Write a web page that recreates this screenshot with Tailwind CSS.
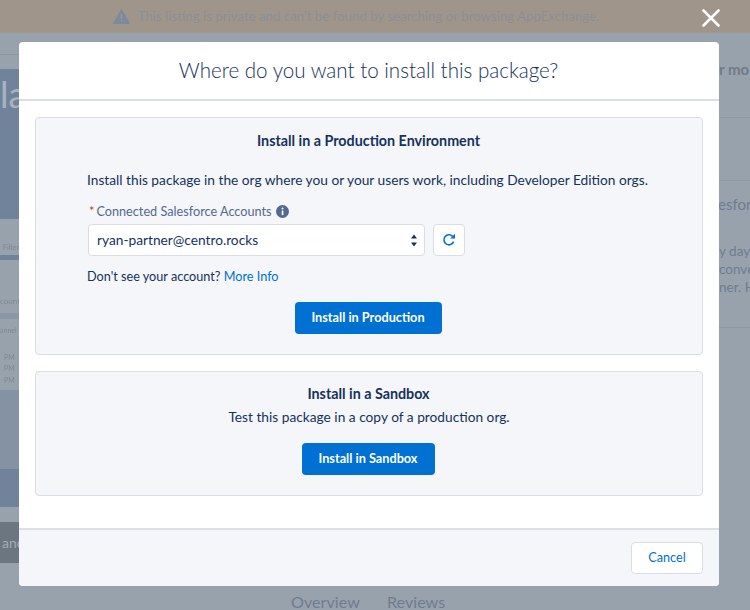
<!DOCTYPE html>
<html>
<head>
<meta charset="utf-8">
<script src="https://cdn.jsdelivr.net/npm/@tailwindcss/browser@4"></script>
</head>
<body class="w-[750px] h-[610px] overflow-hidden relative bg-[#98a2ad] font-['Lato','Noto_Sans',sans-serif] text-[#16325c]">
  <!-- page behind the backdrop -->
  <div class="h-[33px] bg-[#a0958b] flex items-center justify-center gap-[8px] text-[13.25px] text-[#8b8f94] pr-[38px]">
    <svg class="w-[17px] h-[15px]" viewBox="0 0 17 15"><path d="M8.5 0.5 L16.5 14.5 L0.5 14.5 Z" fill="#7d8a9b" stroke="#7d8a9b" stroke-linejoin="round"/><rect x="7.8" y="5" width="1.4" height="5" fill="#a0958b"/><rect x="7.8" y="11" width="1.4" height="1.5" fill="#a0958b"/></svg>
    <span>This listing is private and can't be found by searching or browsing AppExchange.</span>
  </div>
  <div class="flex justify-between h-[577px]">
    <div class="w-[19px] flex flex-col overflow-hidden whitespace-nowrap text-[#7f8a96]">
      <div class="h-[22px] border-b border-[#8a95a2] shrink-0"></div>
      <div class="h-[14px] shrink-0"></div>
      <div class="h-[150px] shrink-0 bg-[#71839b] text-[36px] leading-[34px] text-[#a9b3c0] pt-[8px]">la</div>
      <div class="h-[36px] shrink-0 text-[7px] leading-[8px] pt-[24px] pl-[3px] blur-[0.5px] flex items-start gap-[3px]">Filter<svg class="w-[5px] h-[4px] mt-[2px]" viewBox="0 0 5 4"><path d="M0 0.5 L2.5 3.5 L5 0.5" fill="none" stroke="#7f8a96" stroke-width="0.8"/></svg></div>
      <div class="h-[5px] shrink-0 bg-[#71839b]"></div>
      <div class="h-[53px] shrink-0 text-[8px] leading-[10px] pt-[36px] blur-[0.5px]">count</div>
      <div class="h-[6px] shrink-0 bg-[#8c97a4]"></div>
      <div class="h-[71px] shrink-0 text-[7px] leading-[11.5px] pt-[6px] blur-[0.5px]">annel<div class="h-[15px]"></div><div class="pl-[4px]">PM</div><div class="pl-[4px]">PM</div><div class="pl-[4px]">PM</div></div>
      <div class="h-[79px] shrink-0 bg-[#8492a3]"></div>
      <div class="h-[38px] shrink-0 bg-[#71839b]"></div>
      <div class="h-[15px] shrink-0"></div>
      <div class="h-[41px] shrink-0 bg-[#6b7680] pl-[2px] text-[14px] leading-[41px] text-[#a3abb4]">and</div>
    </div>
    <div class="w-[31px] overflow-hidden whitespace-nowrap text-[#6f7c8e]">
      <div class="h-[33px] text-[15px] font-bold leading-[32px] mt-[20px] text-[#707b88]">r mo</div>
      <div class="mt-[31px] border-t border-[#8e98a4]"></div>
      <div class="mt-[62px] border-t border-[#8e98a4] pt-[14px] h-[36px] text-[15px] leading-[18px] -ml-[1px]">esfor</div>
      <div class="mt-[26px] text-[13.5px] leading-[18px]">y day<br>conve<br>ner. H</div>
      <div class="mt-[31px] border-t border-[#8e98a4]"></div>
    </div>
  </div>
  <div class="absolute left-[291px] top-[592px] flex gap-[27px] text-[16.2px] leading-[20px] text-[#707c8d]">
    <span>Overview</span><span>Reviews</span>
  </div>

  <!-- close -->
  <svg class="absolute left-[702px] top-[9px] w-[18px] h-[18px]" viewBox="0 0 18 18"><path d="M1.5 1.5 L16.5 16.5 M16.5 1.5 L1.5 16.5" stroke="#fff" stroke-width="2.6" stroke-linecap="round" fill="none"/></svg>

  <!-- modal -->
  <div class="absolute left-[19px] top-[42px] w-[700px] h-[544px] bg-white rounded-[4px] flex flex-col overflow-hidden">
    <div class="h-[59px] shrink-0 border-b-2 border-[#dddfe6] flex items-center justify-center text-[20.6px] font-light pb-[1px] -ml-[1px] text-[#16325c]">Where do you want to install this package?</div>
    <div class="flex-1 px-[16px] pt-[16px] flex flex-col gap-[16px]">
      <div class="h-[238px] bg-[#f4f6f9] border border-[#d8dde6] rounded-[4px] flex flex-col pt-[13px] relative">
        <div class="text-center text-[14.3px] font-bold leading-[20px] -ml-[1px]">Install in a Production Environment</div>
        <div class="pl-[51px] mt-[19px] text-[13.72px] leading-[20px] text-[#16325c] whitespace-nowrap">Install this package in the org where you or your users work, including Developer Edition orgs.</div>
        <div class="pl-[53px] mt-[12px] flex items-center text-[12.7px] leading-[18px] text-[#54698d]">
          <span class="text-[#c23934] mr-[2px]">*</span>
          <span>Connected Salesforce Accounts</span>
          <svg class="w-[13px] h-[13px] ml-[4px]" viewBox="0 0 13 13"><circle cx="6.5" cy="6.5" r="6.5" fill="#54698d"/><rect x="5.7" y="5.5" width="1.7" height="4.6" fill="#fff"/><circle cx="6.5" cy="3.6" r="1" fill="#fff"/></svg>
        </div>
        <div class="pl-[52px] mt-[4px] flex gap-[8px]">
          <div class="w-[337px] h-[32px] bg-white border border-[#d8dde6] rounded-[4px] flex items-center justify-between pl-[8px] pr-[6px] text-[13.72px]">
            <span>ryan-partner@centro.rocks</span>
            <svg class="w-[8px] h-[15px]" viewBox="0 0 8 15"><path d="M4 1.5 L7 5.5 L1 5.5 Z M4 13.5 L7 9.5 L1 9.5 Z" fill="#16325c"/></svg>
          </div>
          <div class="w-[32px] h-[32px] bg-white border border-[#d8dde6] rounded-[4px] flex items-center justify-center">
            <svg class="w-[14px] h-[14px]" viewBox="0 0 14 14"><path d="M11.6 8.6 A5 5 0 1 1 10.6 3.4" fill="none" stroke="#0070d2" stroke-width="1.6"/><path d="M13 0.8 L13 5.6 L8.2 5.6 Z" fill="#0070d2"/></svg>
          </div>
        </div>
        <div class="pl-[51px] mt-[12px] text-[12.66px] leading-[18px]">Don't see your account? <span class="text-[#0070d2]">More Info</span></div>
        <div class="mt-[16px] flex justify-center -ml-[2px]">
          <div class="w-[147px] h-[32px] bg-[#0070d2] rounded-[4px] text-white text-[12.7px] font-bold flex items-center justify-center">Install in Production</div>
        </div>
      </div>
      <div class="h-[125px] bg-[#f4f6f9] border border-[#d8dde6] rounded-[4px] flex flex-col items-center pt-[12px]">
        <div class="text-[14.3px] font-bold leading-[20px] -ml-[1px]">Install in a Sandbox</div>
        <div class="text-[13.72px] leading-[20px] mt-[3px]">Test this package in a copy of a production org.</div>
        <div class="mt-[16px] w-[133px] h-[32px] bg-[#0070d2] rounded-[4px] text-white text-[12.7px] font-bold flex items-center justify-center -ml-[2px]">Install in Sandbox</div>
      </div>
    </div>
    <div class="h-[58px] shrink-0 bg-[#f4f6f9] border-t-2 border-[#dddfe6] flex items-center justify-end pr-[16px]">
      <div class="w-[72px] h-[32px] bg-white border border-[#d8dde6] rounded-[4px] text-[#0070d2] text-[12.7px] flex items-center justify-center">Cancel</div>
    </div>
  </div>
</body>
</html>
